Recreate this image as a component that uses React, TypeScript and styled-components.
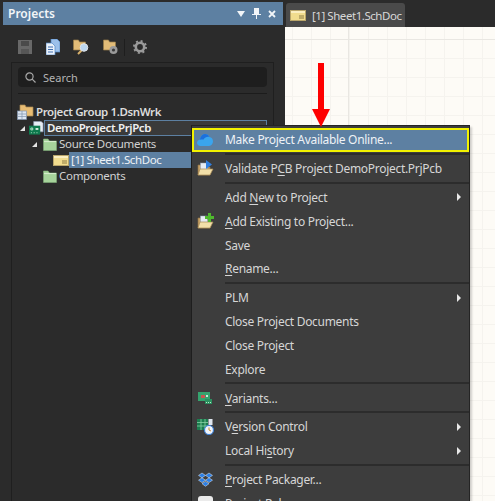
import React from "react";
import styled, { createGlobalStyle } from "styled-components";

const Global = createGlobalStyle`
  html, body { margin: 0; padding: 0; background: #2b2b2b; }
  body { width: 495px; height: 501px; overflow: hidden; font-family: "Noto Sans", "Open Sans", sans-serif; }
`;

const Page = styled.div`
  position: relative;
  display: flex;
  width: 495px;
  height: 501px;
  overflow: hidden;
  background: #2b2b2b;
`;

const Panel = styled.section`
  display: flex;
  flex-direction: column;
  width: 280px;
  margin: 2px 0 0 3px;
  flex: none;
`;

const TitleBar = styled.header`
  display: flex;
  align-items: center;
  height: 23px;
  padding: 0 7px 0 5px;
  background: #5d80a2;
  color: #f2f5f8;
  font-size: 12px;
  font-weight: 600;
`;

const TitleText = styled.span`
  flex: 1;
`;

const TitleTools = styled.div`
  display: flex;
  align-items: center;
  gap: 7px;
`;

const Toolbar = styled.div`
  display: flex;
  align-items: center;
  gap: 13.5px;
  box-sizing: border-box;
  height: 37px;
  padding: 7px 0 0 15px;
`;

const ToolSep = styled.span`
  width: 1px;
  height: 17px;
  background: #1e1e1e;
  margin: 0 -6px 0 -8px;
`;

const TreeBox = styled.div`
  margin-left: 8px;
  width: 263px;
  flex: 1;
  box-sizing: border-box;
  border: 1px solid #1f1f1f;
  border-bottom: 0;
  padding: 4px 6px 0 6px;
`;

const SearchBox = styled.div`
  display: flex;
  align-items: center;
  gap: 7px;
  height: 20px;
  padding-left: 7px;
  border-radius: 4px;
  background: #1e1e1e;
  color: #b4b4b4;
  font-size: 11px;
`;

const Rule = styled.div`
  height: 1px;
  margin-top: 6px;
  background: #1c1c1c;
`;

const Tree = styled.div`
  margin: 10px 0 0 -6px;
`;

const TreeRow = styled.div<{ $level: number }>`
  display: flex;
  align-items: center;
  height: 16px;
  padding-left: ${(p) => p.$level}px;
  color: #d2d2d2;
  font-size: 11.5px;
  letter-spacing: -0.3px;
  white-space: nowrap;
`;

const Caret = styled.span<{ $gap: number }>`
  width: 0;
  height: 0;
  margin-right: ${(p) => p.$gap}px;
  border-left: 5px solid transparent;
  border-bottom: 5px solid #e4e4e4;
`;

const ProjectName = styled.span`
  flex: none;
  box-sizing: border-box;
  width: 223px;
  height: 16px;
  line-height: 13px;
  padding-left: 2px;
  border: 1px solid #5d80a2;
  background: #3a3a3a;
  color: #f0f0f0;
  font-weight: 600;
  letter-spacing: -0.4px;
`;

const GroupName = styled.span`
  margin: 0 0 2px 2px;
  color: #dcdcdc;
  font-weight: 600;
  letter-spacing: -0.4px;
`;

const NodeLabel = styled.span`
  margin: 0 0 2px 2px;
`;

const SelectedLabel = styled.span`
  flex: 1;
  height: 16px;
  line-height: 15px;
  padding-left: 2px;
  background: #5d80a2;
  color: #eef2f6;
  letter-spacing: -0.4px;
`;

const Doc = styled.main`
  display: flex;
  flex-direction: column;
  flex: 1;
  margin-left: 2px;
`;

const TabStrip = styled.div`
  display: flex;
  align-items: flex-end;
  height: 27px;
  padding-left: 1px;
  background: #2b2b2b;
`;

const Tab = styled.div`
  display: flex;
  align-items: center;
  gap: 6px;
  width: 119px;
  box-sizing: border-box;
  height: 24px;
  padding-left: 4px;
  background: #4a4a4a;
  border-radius: 3px 3px 0 0;
  color: #d8d8d8;
  font-size: 11.5px;
  letter-spacing: -0.45px;
  white-space: nowrap;
`;

const Canvas = styled.div`
  flex: 1;
  background-color: #fdfbf6;
  background-image:
    linear-gradient(90deg, transparent 63px, #e9e7e2 63px, #e9e7e2 64px, transparent 64px),
    linear-gradient(180deg, transparent 12px, #e9e7e2 12px, #e9e7e2 13px, transparent 13px),
    linear-gradient(90deg, #f5f3ee 1px, transparent 1px),
    linear-gradient(180deg, #f5f3ee 1px, transparent 1px);
  background-size: 100% 100%, 100% 100%, 19px 19px, 19px 19px;
  background-position: 0 0, 0 0, 7px 0, 0 12px;
`;

const Menu = styled.nav`
  position: absolute;
  left: 191px;
  top: 125px;
  width: 279px;
  height: 400px;
  box-sizing: border-box;
  padding: 2px 0 0 0;
  background: #3d3d3d;
  border: 1px solid #242424;
  border-left-color: #1e1e1e;
  box-shadow: 2px 2px 2px rgba(0, 0, 0, 0.18);
  color: #d6d6d6;
  font-size: 12px;
  letter-spacing: -0.3px;
`;

const Item = styled.div<{ $active?: boolean }>`
  display: flex;
  align-items: center;
  box-sizing: border-box;
  height: 23.9px;
  padding-right: 8px;
  white-space: nowrap;
  ${(p) =>
    p.$active
      ? "background: #5d80a2; outline: 2px solid #f2f200; outline-offset: -2px; color: #eef2f6;"
      : ""}
`;

const IconCell = styled.span`
  display: flex;
  align-items: center;
  justify-content: center;
  flex: none;
  width: 26px;
  margin-right: 7px;
`;

const ItemLabel = styled.span`
  flex: 1;
`;

const Key = styled.span`
  text-decoration: underline;
  text-underline-offset: 2px;
`;

const Chevron = styled.span`
  width: 0;
  height: 0;
  border-left: 4px solid #e8e8e8;
  border-top: 4px solid transparent;
  border-bottom: 4px solid transparent;
`;

const MenuSep = styled.div`
  height: 2px;
  margin: 1px 0 1.8px 33px;
  background: #2c2c2c;
`;

const RedArrow = styled.svg`
  position: absolute;
  left: 312px;
  top: 63px;
`;

const FolderIcon = () => (
  <svg width="14" height="13" viewBox="0 0 14 13">
    <path d="M0.5 1h4.5l1.5 2H13.5v9.5H0.5z" fill="#a6d39b" stroke="#7fae78" strokeWidth="0.6" />
    <path d="M1 3.6h12" stroke="#d9efd0" strokeWidth="1" />
  </svg>
);

const SheetIcon = () => (
  <svg width="16" height="11" viewBox="0 0 16 11">
    <rect x="0.5" y="0.5" width="15" height="10" fill="#f1dc8e" stroke="#b9a56a" />
    <path d="M1 1h14v2H1z" fill="#fbeec0" />
    <path d="M9 6h5M9 8h5" stroke="#8c7a45" strokeWidth="1" />
  </svg>
);

const GroupIcon = () => (
  <svg width="17" height="16" viewBox="0 0 17 16">
    <path d="M3 1h5l1 2h7v9H3z" fill="#e8bd74" stroke="#a88650" strokeWidth="0.7" />
    <rect x="0.5" y="7" width="9" height="8.5" fill="#dde6f2" stroke="#7f93ad" strokeWidth="0.7" />
    <path d="M5 7v8M1 10h8M1 12.5h8" stroke="#7f93ad" strokeWidth="0.7" />
  </svg>
);

const PcbDocIcon = () => (
  <svg width="16" height="15" viewBox="0 0 16 15">
    <path d="M5 0h8l2 2v9H5z" fill="#e8edf5" stroke="#8d9bb3" strokeWidth="0.7" />
    <rect x="0" y="4.5" width="12" height="9.5" fill="#0f7a4e" />
    <path d="M2 7h2v2H2zM2 12h1M5 12h1M8 12h1" stroke="#bfe8cf" strokeWidth="1" fill="none" />
    <rect x="7" y="7" width="3" height="2" fill="#d6f0df" />
  </svg>
);

const CloudIcon = () => (
  <svg width="16" height="13" viewBox="0 0 16 13">
    <path d="M3.500 13C1.500 13 0 11.500 0 9.800c0-1.700 1.200-3 2.800-3.100C3.500 3 5.600 1 8 1c2 0 3.700 1.100 4.400 3 2 .2 3.600 2 3.600 4.300 0 2.600-1.700 4.700-3.900 4.700z" fill="#3aa5ee" />
    <path d="M2.800 6.700C3.500 3 5.600 1 8 1c2 0 3.700 1.100 4.400 3-2.600-.5-4.600.5-5.800 2.600-1.200-.3-2.600-.2-3.800.1z" fill="#1c70dc" />
  </svg>
);

const OpenFolder = ({ accent }: { accent: "arrow" | "plus" }) => (
  <svg width="17" height="17" viewBox="0 0 17 17">
    <path d="M1 5h5l1 2h6v8H1z" fill="#c9a368" stroke="#8c7046" strokeWidth="0.7" />
    <rect x="3.500" y="3" width="7" height="7" fill="#e6ecf4" stroke="#8d9bb3" strokeWidth="0.5" />
    <path d="M3 9h13l-3 6H1z" fill="#f2dfa9" stroke="#a88a55" strokeWidth="0.7" />
    {accent === "arrow" ? (
      <path d="M9 0l6 4.500-6 4.500z" fill="#2f7fe0" />
    ) : (
      <path d="M11 0h3v3h3v3h-3v3h-3V6H8V3h3z" fill="#4fb82e" />
    )}
  </svg>
);

const VariantsIcon = () => (
  <svg width="14" height="12" viewBox="0 0 14 12">
    <rect x="0" y="0" width="12" height="9" fill="#35a36e" />
    <rect x="3" y="3" width="4" height="3" fill="#c8564f" />
    <rect x="8" y="3" width="2" height="2" fill="#d0e8d8" />
    <rect x="7" y="7" width="7" height="5" fill="#2b8f5f" />
    <path d="M8 10.500h1M10 10.500h1M12 10.500h1" stroke="#b6ecc9" strokeWidth="1" />
  </svg>
);

const VersionIcon = () => (
  <svg width="17" height="16" viewBox="0 0 17 16">
    <rect x="0" y="0" width="11" height="11" fill="#1c7d4f" />
    <path d="M0 3.500h11M0 7h11M4 0v11M8 0v11" stroke="#87d2a4" strokeWidth="0.8" />
    <rect x="11.500" y="0" width="4" height="6" fill="#dfe6ef" />
    <circle cx="12" cy="11" r="4.500" fill="#f0f4fa" stroke="#3f82d8" strokeWidth="1.200" />
    <path d="M12 8.500V11l2 1" stroke="#c98a2a" strokeWidth="1" fill="none" />
  </svg>
);

const DropboxIcon = () => (
  <svg width="15" height="15" viewBox="0 0 15 15">
    <path d="M4 1l3.500 2.400-3.500 2.400L.5 3.400zM11 1l3.500 2.400L11 5.800 7.500 3.400zM4 5.800l3.500 2.400-3.500 2.400L.5 8.200zM11 5.800l3.500 2.400-3.500 2.400-3.500-2.400zM7.500 9.400l3.500 2.300-3.500 2.600L4 11.700z" fill="#2b7fe6" stroke="#e4effb" strokeWidth="0.5" />
  </svg>
);

const ReleaserIcon = () => (
  <svg width="15" height="15" viewBox="0 0 15 15">
    <rect x="0" y="0" width="15" height="15" rx="3" fill="#ebebeb" />
  </svg>
);

const DiskIcon = () => (
  <svg width="14" height="14" viewBox="0 0 14 14">
    <path d="M0 0h14v14H0z" fill="#686868" />
    <rect x="3" y="1" width="8" height="5" fill="#4a4a4a" />
    <rect x="3" y="9" width="8" height="5" fill="#565656" />
  </svg>
);

const DocsIcon = () => (
  <svg width="14" height="16" viewBox="0 0 14 16">
    <path d="M5 0h6l3 3v10H5z" fill="#9cc0ea" stroke="#4f84c4" strokeWidth="0.7" />
    <path d="M0 4h6l3 3v9H0z" fill="#eaf1fa" stroke="#4f84c4" strokeWidth="0.7" />
    <path d="M2 8h5M2 10.500h5M2 13h5" stroke="#3f6fb0" strokeWidth="1" />
  </svg>
);

const FindFolder = ({ gear }: { gear?: boolean }) => (
  <svg width="16" height="16" viewBox="0 0 16 16">
    <path d="M0.500 1h5l1 2h6v8h-12z" fill="#e2bc78" stroke="#9a7c48" strokeWidth="0.7" />
    {gear ? (
      <>
        <circle cx="10.500" cy="11" r="4" fill="#9a9a9a" />
        <circle cx="10.500" cy="11" r="1.600" fill="#3a3a3a" />
      </>
    ) : (
      <>
        <path d="M8.500 11.500L5 15" stroke="#d9b26c" strokeWidth="2" />
        <circle cx="11" cy="8.500" r="3.800" fill="#bcd6ee" stroke="#dfe3e8" />
      </>
    )}
  </svg>
);

const GearIcon = () => (
  <svg width="14" height="14" viewBox="0 0 14 14">
    <circle cx="7" cy="7" r="4.200" fill="none" stroke="#9a9a9a" strokeWidth="2.600" />
    <circle cx="7" cy="7" r="6" fill="none" stroke="#9a9a9a" strokeWidth="2" strokeDasharray="2 2.700" />
  </svg>
);

const SearchIcon = () => (
  <svg width="11" height="11" viewBox="0 0 11 11" fill="none" stroke="#a8a8a8" strokeWidth="1.200">
    <circle cx="4.500" cy="4.500" r="3.600" />
    <path d="M7.200 7.200L10.500 10.500" />
  </svg>
);

const DownIcon = () => (
  <svg width="8" height="6" viewBox="0 0 8 6"><path d="M0 0h8L4 6z" fill="#f2f5f8" /></svg>
);
const PinIcon = () => (
  <svg width="9" height="11" viewBox="0 0 9 11"><path d="M2 0h5v6h2v1H5v4H4V7H0V6h2z" fill="#f2f5f8" /></svg>
);
const CloseIcon = () => (
  <svg width="8" height="8" viewBox="0 0 8 8"><path d="M1 1l6 6M7 1L1 7" stroke="#f2f5f8" strokeWidth="1.800" /></svg>
);

type Entry = { icon?: React.ReactNode; label: React.ReactNode; sub?: boolean; active?: boolean } | "sep";

const entries: Entry[] = [
  { icon: <CloudIcon />, label: "Make Project Available Online...", active: true },
  "sep",
  { icon: <OpenFolder accent="arrow" />, label: <>Validate P<Key>C</Key>B Project DemoProject.PrjPcb</> },
  "sep",
  { label: <>Add <Key>N</Key>ew to Project</>, sub: true },
  { icon: <OpenFolder accent="plus" />, label: <><Key>A</Key>dd Existing to Project...</> },
  { label: "Save" },
  { label: <><Key>R</Key>ename...</> },
  "sep",
  { label: "PLM", sub: true },
  { label: "Close Project Documents" },
  { label: "Close Project" },
  { label: "Explore" },
  "sep",
  { icon: <VariantsIcon />, label: <><Key>V</Key>ariants...</> },
  "sep",
  { icon: <VersionIcon />, label: <>V<Key>e</Key>rsion Control</>, sub: true },
  { label: <>Local Hi<Key>s</Key>tory</>, sub: true },
  "sep",
  { icon: <DropboxIcon />, label: <><Key>P</Key>roject Packager...</> },
  { icon: <ReleaserIcon />, label: "Project Releaser..." },
];

export default function App() {
  return (
    <Page>
      <Global />
      <Panel>
        <TitleBar>
          <TitleText>Projects</TitleText>
          <TitleTools>
            <DownIcon />
            <PinIcon />
            <CloseIcon />
          </TitleTools>
        </TitleBar>
        <Toolbar>
          <DiskIcon />
          <DocsIcon />
          <FindFolder />
          <FindFolder gear />
          <ToolSep />
          <GearIcon />
        </Toolbar>
        <TreeBox>
          <SearchBox>
            <SearchIcon />
            Search
          </SearchBox>
          <Rule />
          <Tree>
            <TreeRow $level={5}>
              <GroupIcon />
              <GroupName>Project Group 1.DsnWrk</GroupName>
            </TreeRow>
            <TreeRow $level={8}>
              <Caret $gap={4} />
              <PcbDocIcon />
              <ProjectName>DemoProject.PrjPcb</ProjectName>
            </TreeRow>
            <TreeRow $level={20}>
              <Caret $gap={6} />
              <FolderIcon />
              <NodeLabel>Source Documents</NodeLabel>
            </TreeRow>
            <TreeRow $level={41}>
              <SheetIcon />
              <SelectedLabel>[1] Sheet1.SchDoc</SelectedLabel>
            </TreeRow>
            <TreeRow $level={31}>
              <FolderIcon />
              <NodeLabel>Components</NodeLabel>
            </TreeRow>
          </Tree>
        </TreeBox>
      </Panel>
      <Doc>
        <TabStrip>
          <Tab>
            <SheetIcon />
            [1] Sheet1.SchDoc
          </Tab>
        </TabStrip>
        <Canvas />
      </Doc>
      <Menu>
        {entries.map((e, i) =>
          e === "sep" ? (
            <MenuSep key={i} />
          ) : (
            <Item key={i} $active={e.active}>
              <IconCell>{e.icon}</IconCell>
              <ItemLabel>{e.label}</ItemLabel>
              {e.sub && <Chevron />}
            </Item>
          )
        )}
      </Menu>
      <RedArrow width="18" height="64" viewBox="0 0 18 64">
        <rect x="6" y="0" width="6" height="47" fill="#fe0000" />
        <path d="M0 46h18L9 64z" fill="#fe0000" />
      </RedArrow>
    </Page>
  );
}
